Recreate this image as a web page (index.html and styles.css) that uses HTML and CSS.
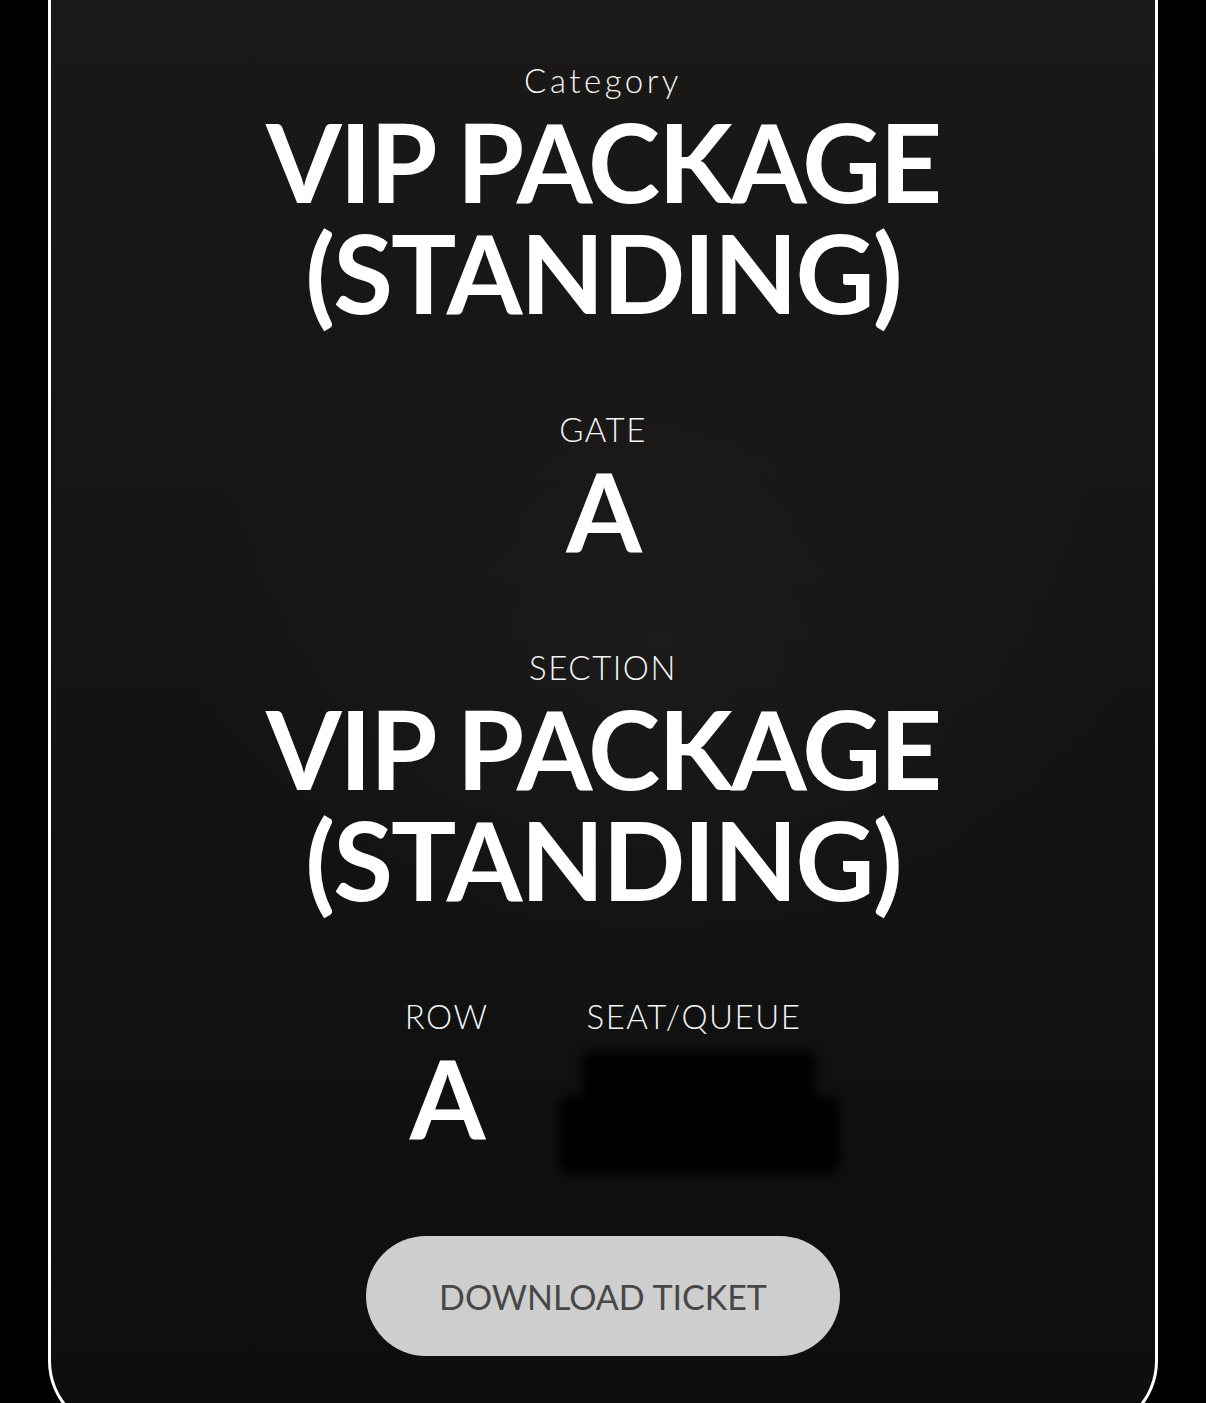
FILE: index.html
```html
<!DOCTYPE html>
<html lang="en">
<head>
<meta charset="utf-8">
<title>Ticket</title>
<link rel="stylesheet" href="styles.css">
</head>
<body>
<main class="card">
  <section class="field field-first">
    <div class="label label-lower">Category</div>
    <div class="value">VIP PACKAGE<br>(STANDING)</div>
  </section>
  <section class="field">
    <div class="label">GATE</div>
    <div class="value">A</div>
  </section>
  <section class="field">
    <div class="label">SECTION</div>
    <div class="value">VIP PACKAGE<br>(STANDING)</div>
  </section>
  <section class="field pair">
    <div class="col">
      <div class="label">ROW</div>
      <div class="value">A</div>
    </div>
    <div class="col seat">
      <div class="label">SEAT/QUEUE</div>
      <div class="value redacted">
        <span class="blob blob-top"></span>
        <span class="blob blob-bottom"></span>
      </div>
    </div>
  </section>
  <button class="download">DOWNLOAD TICKET</button>
</main>
</body>
</html>
```
FILE: styles.css
```css
html, body {
  margin: 0;
  padding: 0;
  height: 1403px;
  overflow: hidden;
  background: #000;
}

body {
  font-family: "Lato", "Liberation Sans", sans-serif;
  color: #fff;
}

.card {
  box-sizing: border-box;
  margin: 0 48px;
  height: 1433px;
  border: 3px solid #fff;
  border-top: none;
  border-radius: 0 0 72px 72px;
  background:
    radial-gradient(ellipse 60% 40% at 55% 45%, rgba(40, 38, 36, 0.35), rgba(0, 0, 0, 0) 70%),
    linear-gradient(180deg, #1b1918 0%, #171615 30%, #121212 60%, #0d0e10 100%);
  display: flex;
  flex-direction: column;
  align-items: center;
  text-align: center;
}

.field {
  display: flex;
  flex-direction: column;
  align-items: center;
  margin-top: 82px;
}

.field-first {
  margin-top: 60px;
}

.label {
  font-size: 33px;
  line-height: 40px;
  font-weight: 300;
  letter-spacing: 1.5px;
  color: #f4f4f4;
  margin-bottom: 5px;
}

.label-lower {
  letter-spacing: 3.5px;
}

.value {
  font-size: 109px;
  line-height: 111px;
  font-weight: 700;
  letter-spacing: -2px;
  color: #fff;
}

.pair {
  flex-direction: row;
  align-items: flex-start;
  gap: 98px;
}

.col {
  display: flex;
  flex-direction: column;
  align-items: center;
}

.redacted {
  position: relative;
  align-self: stretch;
  height: 111px;
}

.blob {
  position: absolute;
  background: #010101;
  filter: blur(5px);
}

.blob-top {
  left: -5px;
  top: 10px;
  width: 233px;
  height: 60px;
  border-radius: 12px;
}

.blob-bottom {
  left: -28px;
  top: 55px;
  width: 281px;
  height: 78px;
  border-radius: 12px;
}

.download {
  margin-top: 84px;
  width: 474px;
  height: 120px;
  border: none;
  border-radius: 60px;
  background: #cecece;
  color: #474747;
  font-family: "Lato", "Liberation Sans", sans-serif;
  font-size: 34px;
  font-weight: 400;
  padding: 0;
}
```
